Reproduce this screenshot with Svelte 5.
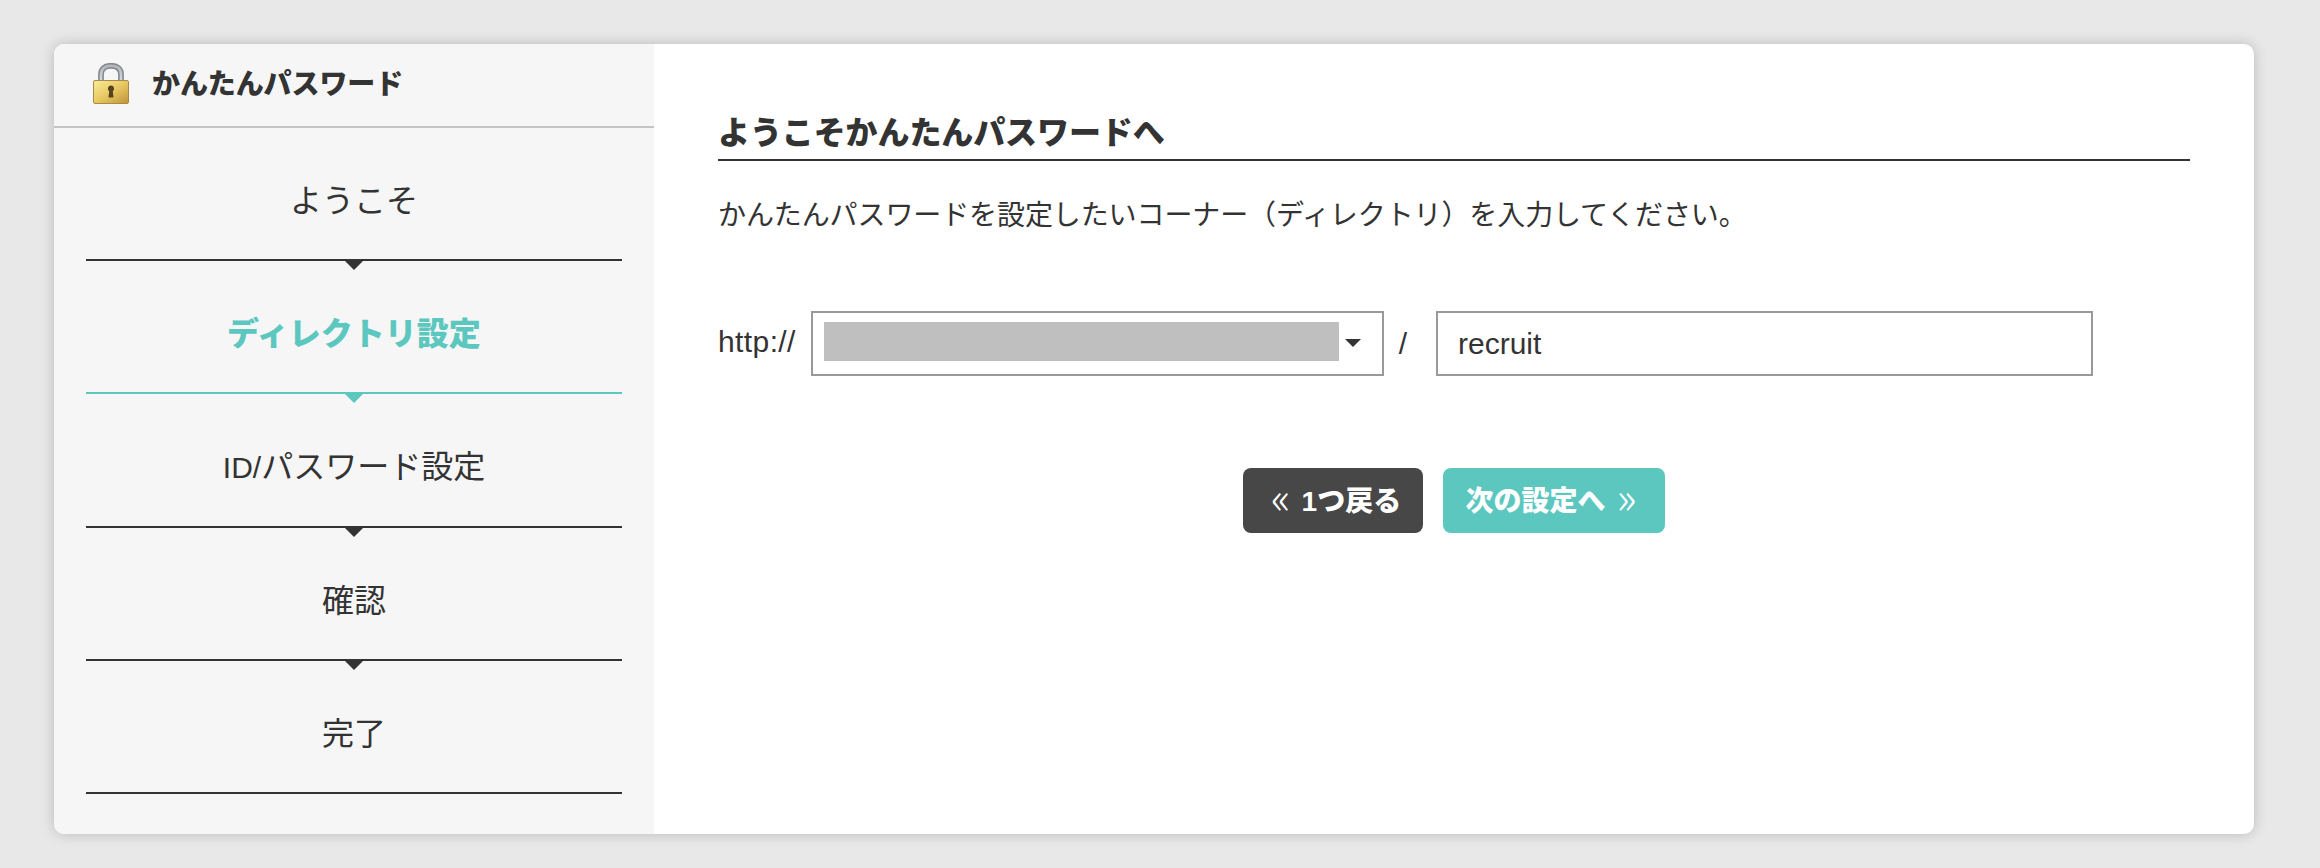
<script>
  const steps = [
    { label: 'ようこそ' },
    { label: 'ディレクトリ設定', active: true },
    { latin: 'ID/', label: 'パスワード設定' },
    { label: '確認' },
    { label: '完了', last: true }
  ];
</script>

<div class="page">
  <div class="card">
    <aside class="side">
      <div class="brand">
        <svg class="lock" viewBox="0 0 36 42" width="36" height="42" aria-hidden="true">
          <defs>
            <linearGradient id="body" x1="0" y1="0" x2="1" y2="1">
              <stop offset="0" stop-color="#f9ec9c" />
              <stop offset="0.5" stop-color="#e8c862" />
              <stop offset="1" stop-color="#bf9338" />
            </linearGradient>
            <linearGradient id="shackle" x1="0" y1="0" x2="0" y2="1">
              <stop offset="0" stop-color="#b4b7bd" />
              <stop offset="1" stop-color="#d8dade" />
            </linearGradient>
          </defs>
          <path d="M8 18V11.500C8 5.500 12 2.800 18 2.800S28 5.500 28 11.500V18" fill="none" stroke="#85888f" stroke-width="5.800" />
          <path d="M8 18V11.500C8 5.500 12 2.800 18 2.800S28 5.500 28 11.500V18" fill="none" stroke="url(#shackle)" stroke-width="2.600" />
          <rect x="0.500" y="17.500" width="35" height="23" rx="1.500" fill="url(#body)" stroke="#a98a4a" stroke-width="1" />
          <path d="M18 22.500a3.200 3.200 0 0 1 1.800 5.800l.7 6.200h-5l.7-6.200a3.200 3.200 0 0 1 1.800-5.800z" fill="#54431c" />
        </svg>
        <span class="title">かんたんパスワード</span>
      </div>
      <ol class="steps">
        {#each steps as s}
          <li class="step" class:active={s.active} class:last={s.last}>{#if s.latin}<span class="latin">{s.latin}</span>{/if}{s.label}</li>
        {/each}
      </ol>
    </aside>
    <main class="main">
      <h1>ようこそかんたんパスワードへ</h1>
      <p class="lead">かんたんパスワードを設定したいコーナー（ディレクトリ）を入力してください。</p>
      <div class="url">
        <span class="scheme">http://</span>
        <div class="select">
          <div class="mask"></div>
          <span class="caret"></span>
        </div>
        <span class="slash">/</span>
        <div class="input">recruit</div>
      </div>
      <div class="actions">
        <button class="btn back"><span class="chev">«</span>1つ戻る</button>
        <button class="btn next">次の設定へ<span class="chev">»</span></button>
      </div>
    </main>
  </div>
</div>

<style>
  :global(body) {
    margin: 0;
    background: #e8e8e8;
  }
  .page {
    box-sizing: border-box;
    width: 2320px;
    height: 868px;
    padding: 44px 66px 34px 54px;
    font-family: "Liberation Sans", "Noto Sans CJK JP", sans-serif;
    color: #333;
  }
  .card {
    display: flex;
    height: 790px;
    background: #fff;
    border-radius: 10px;
    overflow: hidden;
    box-shadow: 0 0 14px rgba(0, 0, 0, 0.2);
  }
  .side {
    flex: 0 0 600px;
    background: #f6f6f6;
  }
  .brand {
    display: flex;
    align-items: center;
    gap: 23px;
    box-sizing: border-box;
    height: 84px;
    padding: 0 0 2px 39px;
    border-bottom: 2px solid #c4c4c4;
    font-size: 28px;
    font-weight: 900;
  }
  .title {
    margin-bottom: 5px;
    letter-spacing: -0.1px;
  }
  .steps {
    list-style: none;
    margin: 0;
    padding: 0 32px;
  }
  .step {
    position: relative;
    padding: 51px 0 36.2px;
    border-bottom: 2px solid #333;
    font-size: 32px;
    line-height: 44px;
    text-align: center;
  }
  .latin {
    font-size: 30px;
    line-height: 0;
  }
  .step::after {
    content: "";
    position: absolute;
    left: 50%;
    top: 100%;
    margin-left: -11px;
    border-style: solid;
    border-width: 11px 11px 0;
    border-color: #333 transparent transparent;
  }
  .step.last::after {
    display: none;
  }
  .step.active {
    color: #5cc7bf;
    font-weight: 900;
    border-bottom-color: #5cc7bf;
  }
  .step.active::after {
    border-top-color: #5cc7bf;
  }
  .main {
    flex: 1;
    padding: 67px 64px 0;
  }
  h1 {
    margin: 0;
    padding-bottom: 4px;
    border-bottom: 2px solid #333;
    font-size: 32px;
    line-height: 44px;
    font-weight: 900;
    letter-spacing: -0.1px;
  }
  .lead {
    margin: 35px 0 0;
    font-size: 28px;
    line-height: 40px;
    letter-spacing: -0.1px;
  }
  .url {
    display: flex;
    align-items: center;
    margin-top: 75px;
    font-size: 30px;
  }
  .scheme {
    width: 93px;
    margin-bottom: 3px;
    letter-spacing: 0.4px;
  }
  .select {
    display: flex;
    align-items: center;
    box-sizing: border-box;
    width: 573px;
    height: 65px;
    padding: 0 0 0 11px;
    border: 2px solid #999;
  }
  .mask {
    width: 515px;
    height: 39px;
    margin-bottom: 5px;
    background: #bfbfbf;
  }
  .caret {
    margin: 0 0 2px 6px;
    border-style: solid;
    border-width: 8px 8px 0;
    border-color: #333 transparent transparent;
  }
  .slash {
    box-sizing: border-box;
    width: 52px;
    padding-right: 14px;
    text-align: center;
  }
  .input {
    display: flex;
    align-items: center;
    box-sizing: border-box;
    width: 657px;
    height: 65px;
    padding-left: 20px;
    border: 2px solid #999;
  }
  .actions {
    display: flex;
    justify-content: center;
    gap: 20px;
    margin-top: 92px;
  }
  .btn {
    display: flex;
    align-items: center;
    justify-content: center;
    box-sizing: border-box;
    height: 65px;
    padding: 0 0 3px;
    border: 0;
    border-radius: 8px;
    color: #fff;
    font-family: inherit;
    font-size: 28px;
    font-weight: 900;
  }
  .back {
    width: 180px;
    padding-left: 6px;
    background: #474747;
  }
  .next {
    width: 222px;
    padding-right: 6px;
    background: #5cc7bf;
  }
  .chev {
    font-family: "Noto Sans CJK JP", sans-serif;
    font-size: 44px;
    line-height: 1;
    font-weight: 300;
    position: relative;
    top: -4px;
  }
  .back .chev {
    margin-right: 11px;
  }
  .next .chev {
    margin-left: 11px;
  }
</style>
